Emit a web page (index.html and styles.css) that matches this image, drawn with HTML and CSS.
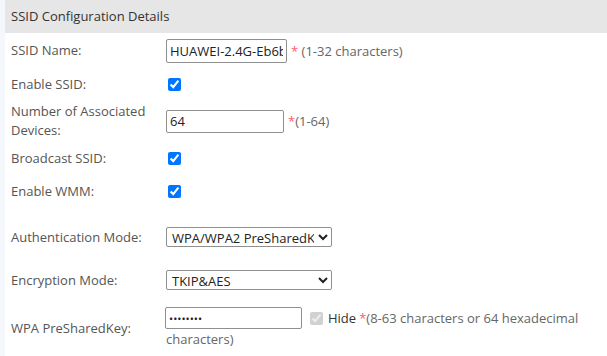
FILE: index.html
```html
<!DOCTYPE html>
<html lang="en">
<head>
    <meta charset="UTF-8">
    <meta name="viewport" content="width=device-width, initial-scale=1.0">
    <title>SSID Configuration</title>
    <link rel="stylesheet" href="styles.css">
</head>
<body>
    <div class="panel">
        <!-- Cabecera del bloque -->
        <div class="panel-title">SSID Configuration Details</div>

        <div class="row row-name">
            <label class="label" for="ssidName">SSID Name:</label>
            <div class="field">
                <input type="text" id="ssidName" class="input input-name" value="HUAWEI-2.4G-Eb6b">
                <span class="req">*</span><span class="hint">&nbsp;(1-32 characters)</span>
            </div>
        </div>

        <div class="row row-enable">
            <label class="label" for="enableSsid">Enable SSID:</label>
            <div class="field"><input type="checkbox" id="enableSsid" checked></div>
        </div>

        <div class="row row-devices">
            <label class="label" for="devices">Number of Associated Devices:</label>
            <div class="field">
                <input type="text" id="devices" class="input input-devices" value="64">
                <span class="req">*</span><span class="hint">(1-64)</span>
            </div>
        </div>

        <div class="row row-broadcast">
            <label class="label" for="broadcast">Broadcast SSID:</label>
            <div class="field"><input type="checkbox" id="broadcast" checked></div>
        </div>

        <div class="row row-wmm">
            <label class="label" for="wmm">Enable WMM:</label>
            <div class="field"><input type="checkbox" id="wmm" checked></div>
        </div>

        <div class="row row-auth">
            <label class="label" for="authMode">Authentication Mode:</label>
            <div class="field">
                <select id="authMode" class="select">
                    <option>WPA/WPA2 PreSharedKey</option>
                    <option>Open</option>
                </select>
            </div>
        </div>

        <div class="row row-enc">
            <label class="label" for="encMode">Encryption Mode:</label>
            <div class="field">
                <select id="encMode" class="select">
                    <option>TKIP&amp;AES</option>
                    <option>AES</option>
                </select>
            </div>
        </div>

        <div class="row row-key">
            <label class="label" for="psk">WPA PreSharedKey:</label>
            <div class="field-key">
                <div class="key-line">
                    <input type="password" id="psk" class="input input-key" value="12345678">
                    <input type="checkbox" class="hide-box" checked disabled>
                    <span class="hide-text">Hide</span>
                    <span class="req">*</span><span class="hint">(8-63 characters or 64 hexadecimal</span>
                </div>
                <div class="hint">characters)</div>
            </div>
        </div>
    </div>
</body>
</html>
```

FILE: styles.css
```css
body {
    margin: 0;
    background-color: #f4f7fb;
    font-family: 'Open Sans', 'Noto Sans', sans-serif;
    font-size: 13px;
    color: #555555;
}

.panel {
    margin-left: 5px;
    height: 356px;
    background-color: #ffffff;
    overflow: hidden;
}

.panel-title {
    height: 33px;
    line-height: 33px;
    padding-left: 6px;
    background-color: #e6e6e6;
    color: #333333;
}

.row {
    display: flex;
    align-items: center;
    padding-left: 6px;
}

.label {
    width: 155px;
    flex-shrink: 0;
    line-height: 19px;
}

.field {
    display: flex;
    align-items: center;
}

/* Alturas de cada fila */
.row-name { height: 35px; }
.row-enable { height: 33px; }
.row-devices { height: 40px; }
.row-broadcast { height: 34px; }
.row-wmm { height: 32px; }
.row-auth { height: 60px; }
.row-enc { height: 26px; }
.row-key { height: 40px; margin-top: 15px; }

.row-devices .label {
    width: 140px;
    margin-right: 15px;
}

.input {
    box-sizing: border-box;
    border: 1px solid #8f8f8f;
    border-radius: 2px;
    padding: 0 3px;
    font-family: inherit;
    font-size: 13px;
    color: #222222;
    background-color: #ffffff;
}

.input-name {
    width: 121px;
    height: 24px;
}

.input-devices {
    width: 118px;
    height: 23px;
}

.input-key {
    width: 137px;
    height: 22px;
    margin-left: -1px;
    font-size: 11px;
}

.req {
    color: #ff5a6e;
    margin-left: 4px;
}

.hint {
    color: #666666;
}

input[type="checkbox"] {
    margin: 0 0 0 2px;
    width: 13px;
    height: 13px;
}

.select {
    width: 166px;
    height: 20px;
    border: 1px solid #8f8f8f;
    border-radius: 2px;
    font-family: inherit;
    font-size: 13px;
    color: #222222;
    background-color: #ffffff;
    padding: 0 1px;
}

.field-key {
    line-height: 20px;
}

.key-line {
    display: flex;
    align-items: center;
}

.key-line .hide-box {
    margin: 0 3px 0 8px;
}

.hide-text {
    color: #333333;
    margin-left: 2px;
}

.key-line .req {
    margin-left: 3px;
}
```
